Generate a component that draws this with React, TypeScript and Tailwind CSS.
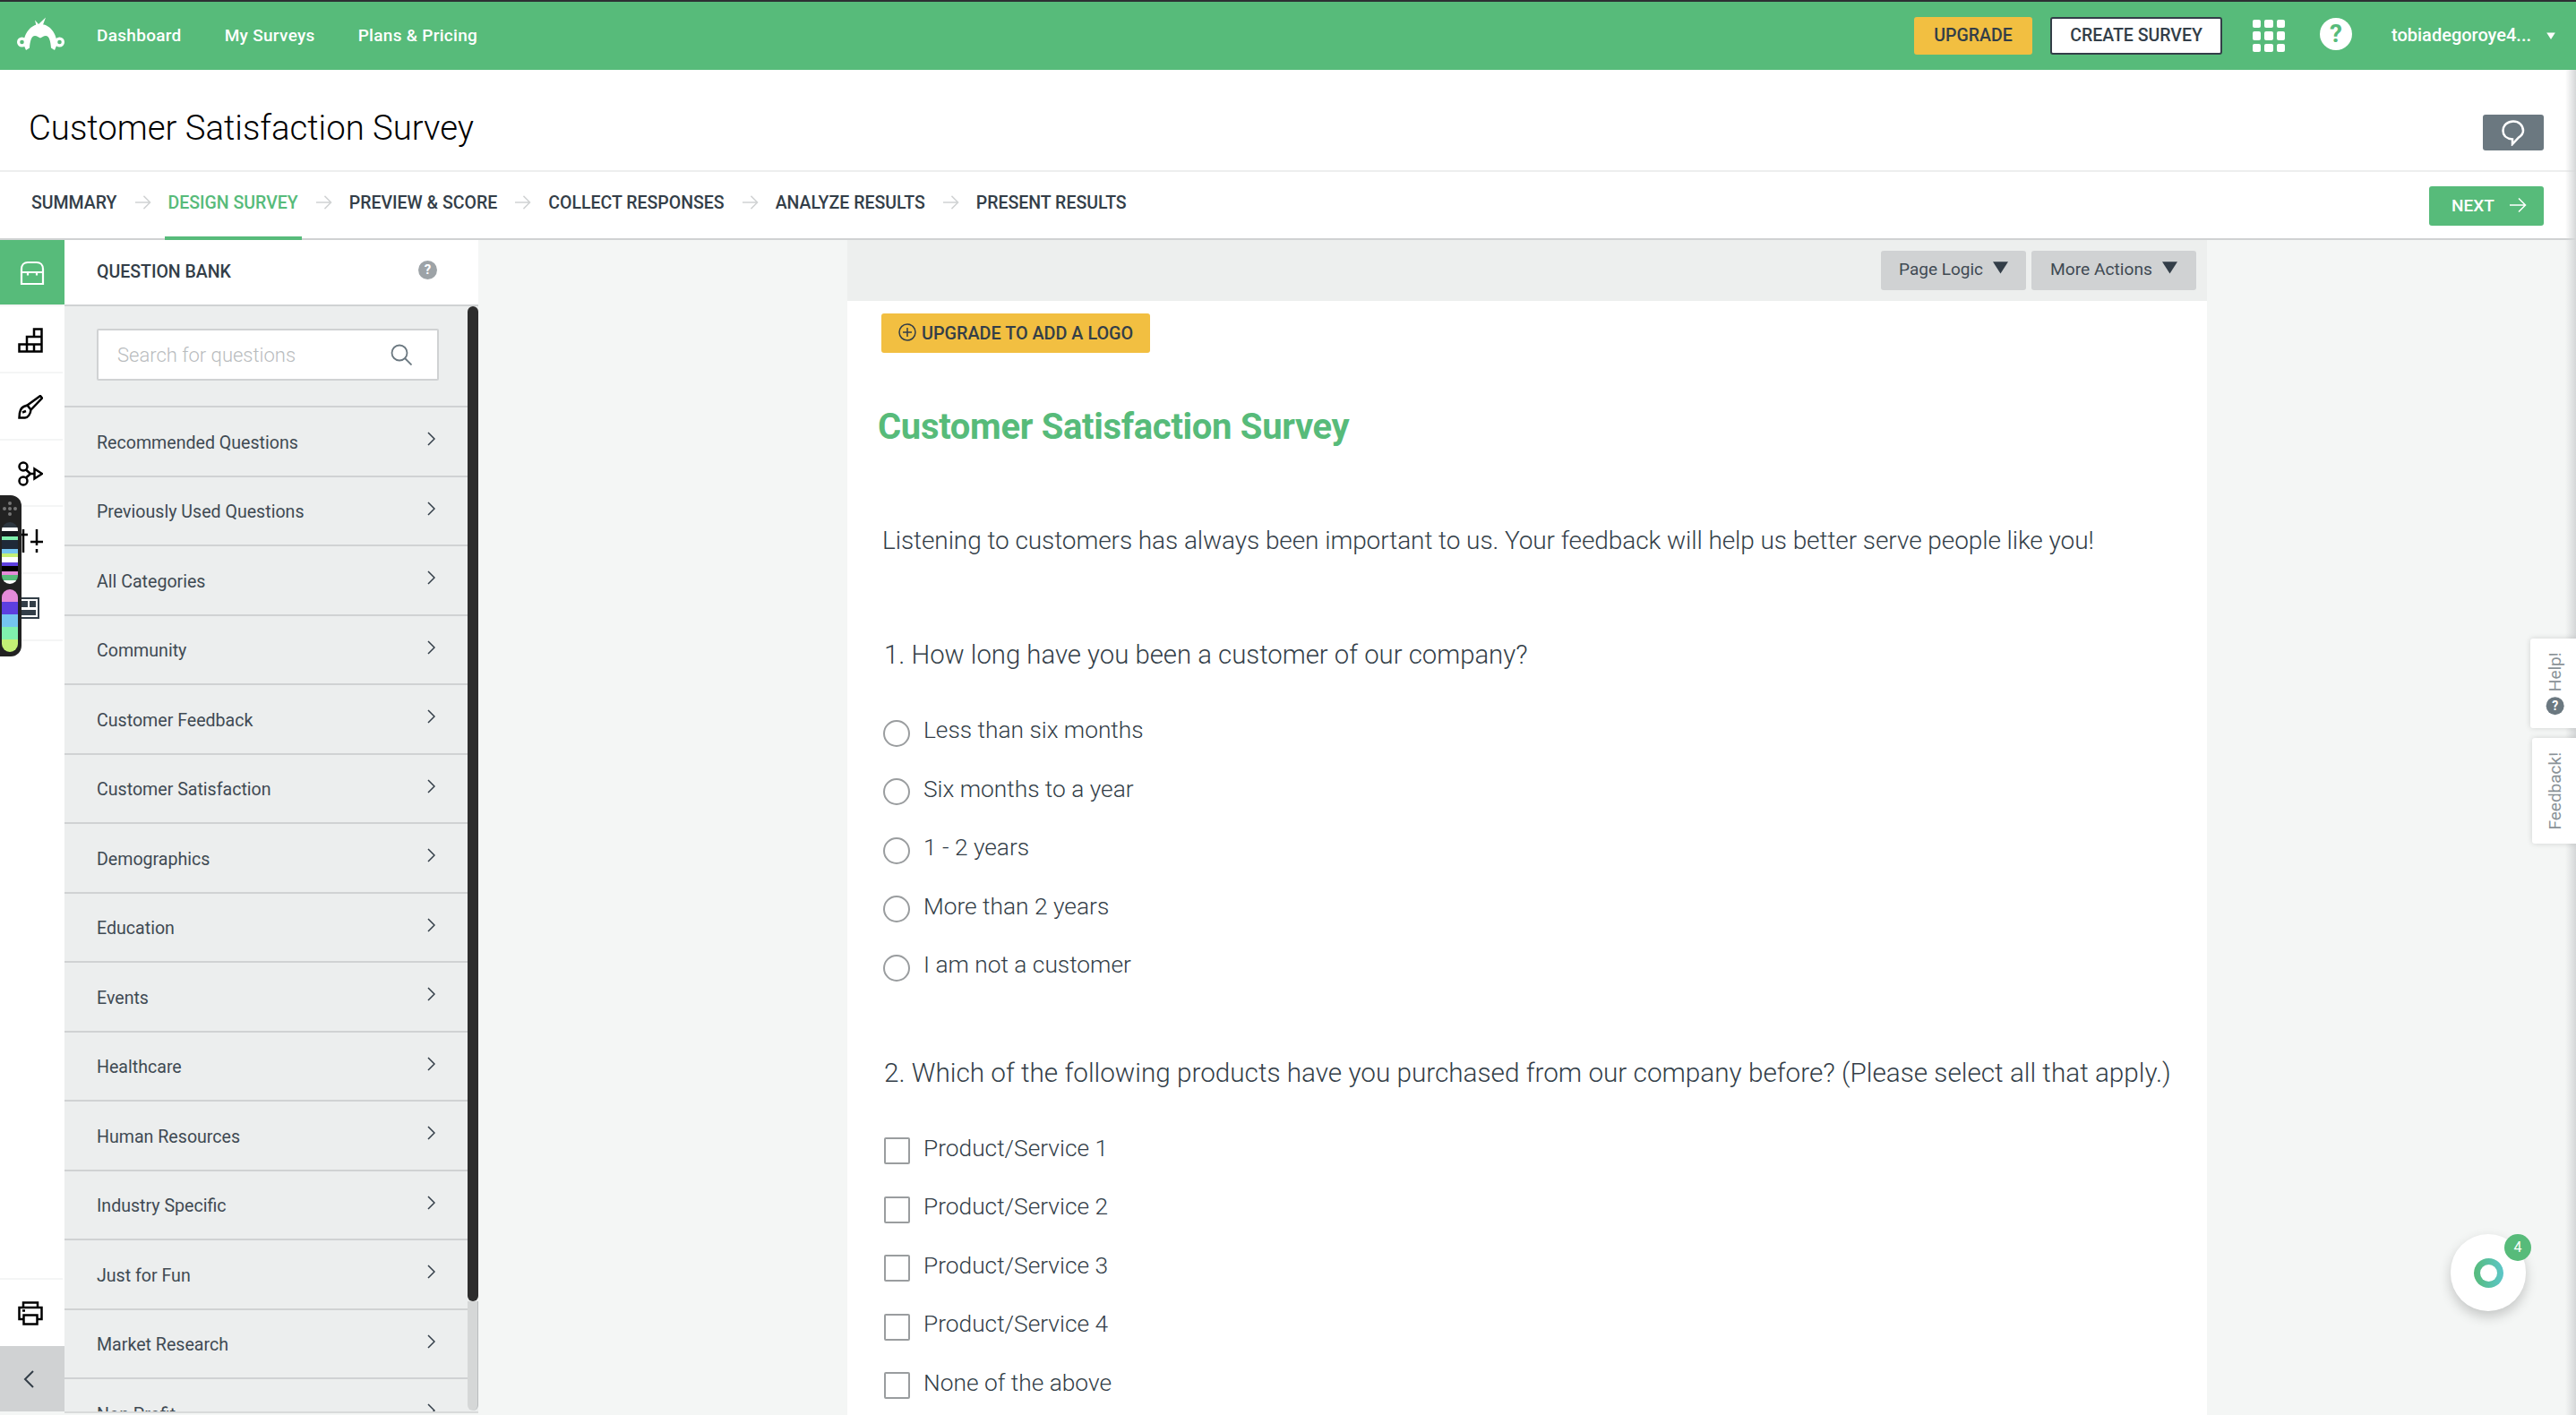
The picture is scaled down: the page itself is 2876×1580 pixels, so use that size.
import React from "react";

const font = { fontFamily: "Roboto, 'Noto Sans', sans-serif" };

const Arrow = ({ className = "" }: { className?: string }) => (
  <svg viewBox="0 0 20 18" className={className} fill="none" stroke="currentColor" strokeWidth="1.5">
    <path d="M1 9h17.5M11 1.5 18.5 9 11 16.5" />
  </svg>
);

const Caret = ({ className = "" }: { className?: string }) => (
  <svg viewBox="0 0 18 15" className={className} fill="currentColor">
    <path d="M0 1h18L9 15z" />
  </svg>
);

const Logo = () => (
  <svg viewBox="0 0 70 50" className="w-[70px] h-[50px] ml-[10px] shrink-0">
    <path fill="#fff" d="M30.500 14 29 7.500l4 4.500 8-7.500L37.500 14z" />
    <path fill="#fff" d="M19 41 16 34C17 23 23.500 12 35 12c11.500 0 18 11 19 22l-3 7-4-2.500C46.500 31 45 25 41 25c-2.500 0-4 1.500-6 2.500-2-1-3.500-2.500-6-2.500-4 0-5.500 6-6 13.500z" />
    <circle cx="14.500" cy="32" r="5.500" fill="#fff" />
    <circle cx="56.500" cy="32" r="5.500" fill="#fff" />
    <circle cx="14.500" cy="32" r="2.300" fill="#57bb7a" />
    <circle cx="56.500" cy="32" r="2.300" fill="#57bb7a" />
  </svg>
);

const Chest = () => (
  <svg viewBox="0 0 28 28" className="w-7 h-7 mt-[2px]" fill="none" stroke="#fff" strokeWidth="2.200">
    <path d="M2 26V9.500C2 5 5 2 9 2h10c4 0 7 3 7 7.500V26z" />
    <path d="M2 13h24M9 13v3.500M19 13v3.500" />
  </svg>
);

const Bars = () => (
  <svg viewBox="0 0 28 28" className="w-7 h-7" fill="none" stroke="#000" strokeWidth="2.500">
    <path d="M1.500 18.500h25v8h-25zM10 18.500v8M18 18.500v8M10 10h16.500v8.500H10zM18 1.500h8.500V10H18z" />
  </svg>
);

const Brush = () => (
  <svg viewBox="0 0 28 28" className="w-7 h-7" fill="none" stroke="#000" strokeWidth="2.500">
    <path d="M27 3.500 25 1 10.500 11.500l4 5zM10.500 11.500l-4 1.500C3 14.500 1.500 18 1.500 25.500H8c3 0 6-4 6.500-9" />
    <path d="M5 19.500 9 18" />
  </svg>
);

const Branch = () => (
  <svg viewBox="0 0 28 28" className="w-7 h-7" fill="none" stroke="#000" strokeWidth="2.500">
    <circle cx="6" cy="6" r="4.500" />
    <circle cx="6" cy="22" r="4.500" />
    <path d="M9 9.500 14 14 9 18.500M14 14h4.500M18.500 8.500 27 14l-8.500 5.500z" />
  </svg>
);

const Sliders = () => (
  <svg viewBox="0 0 28 28" className="w-7 h-7" fill="none" stroke="#000" strokeWidth="2.500">
    <path d="M6 1v26M1 7h10M21 1v18M21 23v4M14 15h14" />
  </svg>
);

const LayoutIcon = () => (
  <svg viewBox="0 0 24 24" className="w-6 h-6">
    <path fill="none" stroke="#333e48" strokeWidth="2" d="M1 1h22v22H1z" />
    <path fill="#333e48" d="M4 4h7v7H4zM13 4h7v7h-7zM4 14h16v6H4z" />
  </svg>
);

const Printer = () => (
  <svg viewBox="0 0 28 28" className="w-7 h-7" fill="none" stroke="#000" strokeWidth="2.500">
    <path d="M6 8V2.500h16V8M6 21H1.500V8h25v13H22" />
    <path d="M6.500 16.500h15v10h-15z" />
    <path d="M5 11.500h3" />
  </svg>
);

const Chevron = ({ className = "" }: { className?: string }) => (
  <svg viewBox="0 0 9 16" className={className} fill="none" stroke="currentColor" strokeWidth="1.500">
    <path d="M1 1l7 7-7 7" />
  </svg>
);

const tabs = ["SUMMARY", "DESIGN SURVEY", "PREVIEW & SCORE", "COLLECT RESPONSES", "ANALYZE RESULTS", "PRESENT RESULTS"];

const rows = [
  "Recommended Questions",
  "Previously Used Questions",
  "All Categories",
  "Community",
  "Customer Feedback",
  "Customer Satisfaction",
  "Demographics",
  "Education",
  "Events",
  "Healthcare",
  "Human Resources",
  "Industry Specific",
  "Just for Fun",
  "Market Research",
  "Non Profit",
];

const radios = ["Less than six months", "Six months to a year", "1 - 2 years", "More than 2 years", "I am not a customer"];
const checks = ["Product/Service 1", "Product/Service 2", "Product/Service 3", "Product/Service 4", "None of the above"];

const railIcons = [<Bars key="b" />, <Brush key="c" />, <Branch key="d" />, <Sliders key="e" />, <LayoutIcon key="f" />];

const upper: [string, string][] = [
  ["h-[6px]", "bg-[#2e3740]"],
  ["h-[4px]", "bg-white"],
  ["h-[6px]", "bg-[#15191f]"],
  ["h-[4px]", "bg-[#80f0ae]"],
  ["h-[10px]", "bg-[#1f2a38]"],
  ["h-[5px]", "bg-[#74c5f0]"],
  ["h-[4px]", "bg-[#c3f075]"],
  ["h-[6px]", "bg-white"],
  ["h-[4px]", "bg-[#5d3fe0]"],
  ["h-[6px]", "bg-black"],
  ["h-[4px]", "bg-[#e58ad9]"],
  ["h-[6px]", "bg-[#57bb7a]"],
  ["h-[4px]", "bg-white"],
];

const lower = ["bg-[#e58ad9]", "bg-[#5d3fe0]", "bg-[#74c5f0]", "bg-[#80f0ae]", "bg-[#c3f075]"];

export default function App() {
  return (
    <div style={font} className="relative w-[2876px] h-[1580px] overflow-hidden bg-[#f4f6f5] text-[#333e48] flex flex-col">
      <header className="h-[78px] shrink-0 border-t-2 border-[#2d2f33] bg-[#57bb7a] flex items-center text-white">
        <Logo />
        <nav className="flex items-center ml-[28px] gap-[48px] text-[19px] tracking-[0.3px] font-medium mt-[1px]">
          <span>Dashboard</span>
          <span>My Surveys</span>
          <span>Plans &amp; Pricing</span>
        </nav>
        <div className="ml-auto flex items-center h-full">
          <button className="w-[132px] h-[42px] rounded-[3px] bg-[#f2bf41] text-[#333e48] text-[19.500px] font-medium">UPGRADE</button>
          <button className="ml-[20px] w-[192px] h-[42px] rounded-[3px] bg-white border-2 border-[#333e48] text-[#333e48] text-[19.500px] font-medium">CREATE SURVEY</button>
          <div className="ml-[34px] w-[36px] h-[36px] grid grid-cols-3 gap-[4px]">
            {Array.from({ length: 9 }).map((_, i) => (
              <span key={i} className="bg-white rounded-[2px]" />
            ))}
          </div>
          <span className="ml-[39px] w-[36px] h-[36px] mt-[-4px] rounded-full bg-white text-[#57bb7a] flex items-center justify-center text-[28px] font-bold">?</span>
          <span className="ml-[44px] w-[154px] mt-[-2px] text-[20px] font-medium whitespace-nowrap">tobiadegoroye4...</span>
          <Caret className="ml-[17px] mr-[21px] w-[14px] h-[8px] text-white" />
        </div>
      </header>

      <div className="h-[114px] shrink-0 bg-white border-b-2 border-[#edeeee] flex items-center justify-between pt-[20px] pl-[32px] pr-[36px]">
        <h1 className="text-[38.300px] font-light text-black leading-none mt-[-2px]">Customer Satisfaction Survey</h1>
        <button className="w-[68px] h-[40px] mt-[8px] rounded-[3px] bg-[#6b7880] flex items-center justify-center">
          <svg viewBox="0 0 30 30" className="w-[30px] h-[30px]" fill="none" stroke="#fff" strokeWidth="2.500">
            <path d="M15 2.500C9 2.500 3.500 6.500 3.500 13 3.500 18.500 8 22 14 22.500V28l7-7.500c3-2 5-4 5-7.500C26 6.500 21 2.500 15 2.500z" />
          </svg>
        </button>
      </div>

      <div className="h-[76px] shrink-0 bg-white border-b-2 border-[#d0d2d3] flex items-stretch pl-[35px] pr-[36px]">
        {tabs.map((t, i) => (
          <React.Fragment key={t}>
            {i === 1 ? (
              <div className="flex items-center px-[4px] mx-[-4px] font-medium text-[19.500px] text-[#57bb7a] border-b-4 border-[#57bb7a] mb-[-2px]">
                <span className="mt-[-3px]">{t}</span>
              </div>
            ) : (
              <div className="flex items-center font-medium text-[19.500px]">
                <span className="mt-[-5px]">{t}</span>
              </div>
            )}
            {i < tabs.length - 1 && (
              <div className="flex items-center px-[19px]">
                <Arrow className="w-[19px] h-[18px] mt-[-6px] text-[#d0d2d3]" />
              </div>
            )}
          </React.Fragment>
        ))}
        <div className="ml-auto self-center">
          <button className="w-[128px] h-[44px] mt-[2px] rounded-[3px] bg-[#57bb7a] text-white text-[19px] font-medium flex items-center justify-center gap-[16px] pl-[6px]">
            NEXT
            <Arrow className="w-[20px] h-[18px] mt-[-2px] text-white" />
          </button>
        </div>
      </div>

      <div className="flex-1 min-h-0 flex">
        <aside className="w-[72px] shrink-0 h-[1308px] bg-white flex flex-col">
          <div className="h-[72px] bg-[#57bb7a] flex items-center justify-center shrink-0"><Chest /></div>
          <div className="h-[2px] bg-[#f4f5f5] w-[70px] shrink-0" />
          {railIcons.map((ic, i) => (
            <div key={i} className="h-[74.800px] w-[70px] shrink-0 border-b-2 border-[#f4f5f5] flex items-center pl-[20px] pt-[3px]">{ic}</div>
          ))}
          <div className="flex-1 w-[70px] border-b-2 border-[#f4f5f5]" />
          <div className="h-[74px] w-[70px] shrink-0 flex items-center pl-[20px]"><Printer /></div>
          <div className="h-[73px] shrink-0 bg-[#d0d2d3] flex items-center pl-[26px]">
            <svg viewBox="0 0 12 20" className="w-[12px] h-[20px]" fill="none" stroke="#333e48" strokeWidth="2">
              <path d="M11 1 2 10l9 9" />
            </svg>
          </div>
        </aside>

        <section className="w-[462px] shrink-0 h-[1310px] border-b-2 border-[#d8dada] flex flex-col">
          <div className="h-[74px] shrink-0 bg-white border-b-2 border-[#d0d2d3] flex items-center pl-[36px] pr-[46px] justify-between">
            <span className="text-[19.500px] font-medium mt-[-1px]">QUESTION BANK</span>
            <span className="w-[21px] h-[21px] rounded-full bg-[#9da3a7] text-white text-[15px] font-bold flex items-center justify-center mt-[-6px]">?</span>
          </div>
          <div className="flex-1 min-h-0 flex bg-[#eceeee]">
            <div className="w-[450px] overflow-hidden">
              <div className="h-[113px] border-b-2 border-[#d0d2d3] pl-[36px] pt-[25px]">
                <div className="w-[382px] h-[58px] bg-white border-2 border-[#d0d2d3] rounded-[2px] flex items-center justify-between pl-[21px] pr-[28px]">
                  <span className="text-[22px] font-light text-[#b9bcbe]">Search for questions</span>
                  <svg viewBox="0 0 24 24" className="w-[24px] h-[24px]" fill="none" stroke="#6b7880" strokeWidth="1.800">
                    <circle cx="10" cy="10" r="8.500" />
                    <path d="m16 16 7.500 7.500" />
                  </svg>
                </div>
              </div>
              {rows.map((r) => (
                <div key={r} className="h-[77.500px] border-b-2 border-[#d0d2d3] flex items-center justify-between pl-[36px] pr-[36px]">
                  <span className="text-[19.600px] text-[#3f4a53] mt-[3px]">{r}</span>
                  <Chevron className="w-[9px] h-[16px] mt-[-5px] text-[#333e48]" />
                </div>
              ))}
            </div>
            <div className="w-[12px] flex flex-col">
              <div className="h-[1111px] shrink-0 bg-[#2d2d2d] rounded-[6px]" />
              <div className="flex-1 bg-[#d5d7d7] rounded-b-[6px] border-r border-[#b9bcbe] mb-[1px]" />
            </div>
          </div>
        </section>

        <main className="ml-[412px] w-[1518px] shrink-0 bg-white flex flex-col">
          <div className="h-[68px] shrink-0 bg-[#edefee] flex items-center justify-end gap-[6px] pr-[12px]">
            <button className="w-[162px] h-[44px] rounded-[3px] bg-[#d0d2d3] text-[19px] text-[#3f4a53] flex items-center pl-[20px] gap-[11px] pb-[1px]">
              Page Logic
              <Caret className="w-[17px] h-[15px] mt-[-6px] text-[#333e48]" />
            </button>
            <button className="w-[184px] h-[44px] rounded-[3px] bg-[#d0d2d3] text-[19.200px] text-[#3f4a53] flex items-center pl-[21px] gap-[11px] pb-[1px]">
              More Actions
              <Caret className="w-[17px] h-[15px] mt-[-6px] text-[#333e48]" />
            </button>
          </div>

          <button className="ml-[38px] mt-[14px] w-[300px] h-[44px] shrink-0 rounded-[3px] bg-[#f2bf41] text-[19.800px] font-medium flex items-center pl-[19px] gap-[6px] pt-[2px]">
            <svg viewBox="0 0 20 20" className="w-[20px] h-[20px] mt-[-4px]" fill="none" stroke="#333e48" strokeWidth="1.500">
              <circle cx="10" cy="10" r="9" />
              <path d="M10 5v10M5 10h10" />
            </svg>
            UPGRADE TO ADD A LOGO
          </button>

          <h2 className="ml-[34px] mt-[58px] h-[50px] leading-[50px] text-[40px] tracking-[-0.320px] font-bold text-[#57bb7a] whitespace-nowrap">Customer Satisfaction Survey</h2>

          <p className="ml-[39px] mt-[84px] h-[36px] leading-[36px] text-[28px] tracking-[-0.080px] font-light whitespace-nowrap">Listening to customers has always been important to us. Your feedback will help us better serve people like you!</p>

          <p className="ml-[41px] mt-[91px] h-[36px] leading-[36px] text-[29.300px] font-light whitespace-nowrap">1. How long have you been a customer of our company?</p>

          <div className="ml-[40px] mt-[36px] flex flex-col">
            {radios.map((r) => (
              <div key={r} className="h-[65.500px] flex items-center gap-[15px]">
                <span className="w-[30px] h-[30px] rounded-full border-2 border-[#9a9d9f] mt-[2px]" />
                <span className="text-[26.300px] font-light leading-none mt-[-5px]">{r}</span>
              </div>
            ))}
          </div>

          <p className="ml-[41px] mt-[67px] h-[36px] leading-[36px] text-[29.700px] font-light whitespace-nowrap">2. Which of the following products have you purchased from our company before? (Please select all that apply.)</p>

          <div className="ml-[41px] mt-[36px] flex flex-col">
            {checks.map((c) => (
              <div key={c} className="h-[65.500px] flex items-center gap-[15px]">
                <span className="w-[29px] h-[30px] rounded-[2px] border-2 border-[#9a9d9f] mt-[2px]" />
                <span className="text-[26.300px] font-light leading-none mt-[-5px]">{c}</span>
              </div>
            ))}
          </div>
        </main>
      </div>

      <div className="absolute top-[78px] right-0 bottom-0 w-[12px] bg-gradient-to-r from-transparent to-[#d5d7d8]" />

      <div className="absolute left-0 top-[553px] w-[24px] h-[180px] bg-[#222] rounded-r-[12px] flex flex-col items-center pt-[6px] pr-[4px] pl-[2px]">
        <svg viewBox="0 0 18 18" className="w-[18px] h-[18px] shrink-0" fill="#777">
          <circle cx="9" cy="3" r="2" />
          <circle cx="3" cy="9" r="2" />
          <circle cx="9" cy="9" r="2" />
          <circle cx="15" cy="9" r="2" />
          <circle cx="9" cy="15" r="2" />
        </svg>
        <div className="w-full mt-[6px] rounded-full overflow-hidden flex flex-col shrink-0">
          {upper.map(([h, c], i) => (
            <span key={i} className={h + " " + c} />
          ))}
        </div>
        <div className="w-full mt-[6px] rounded-full overflow-hidden flex flex-col shrink-0">
          {lower.map((c) => (
            <span key={c} className={"h-[14px] " + c} />
          ))}
        </div>
      </div>

      <div className="absolute right-0 top-[713px] w-[51px] h-[100px] bg-white rounded-l-[3px] shadow-[0_0_6px_rgba(0,0,0,0.15)] flex items-center justify-center pl-[5px]">
        <div className="-rotate-90 flex items-center gap-[6px] whitespace-nowrap text-[19px] text-[#8a9297]">
          <span className="w-[20px] h-[20px] rounded-full bg-[#6b7880] text-white text-[14px] font-bold flex items-center justify-center rotate-90">?</span>
          Help!
        </div>
      </div>
      <div className="absolute right-0 top-[824px] w-[49px] h-[118px] bg-white rounded-l-[3px] shadow-[0_0_6px_rgba(0,0,0,0.15)] flex items-center justify-center pl-[3px]">
        <span className="-rotate-90 whitespace-nowrap text-[19px] text-[#8a9297]">Feedback!</span>
      </div>

      <div className="absolute left-[2736px] top-[1378px] w-[84px] h-[86px] rounded-full bg-white shadow-[0_6px_14px_rgba(0,0,0,0.2)] flex items-center justify-center">
        <span className="w-[33px] h-[33px] rounded-full bg-gradient-to-r from-[#57bb7a] to-[#5cc6c8] flex items-center justify-center">
          <span className="w-[19px] h-[19px] rounded-full bg-white" />
        </span>
      </div>
      <span className="absolute left-[2796px] top-[1378px] w-[30px] h-[30px] rounded-full bg-[#57bb7a] text-white text-[16px] flex items-center justify-center">4</span>
    </div>
  );
}
